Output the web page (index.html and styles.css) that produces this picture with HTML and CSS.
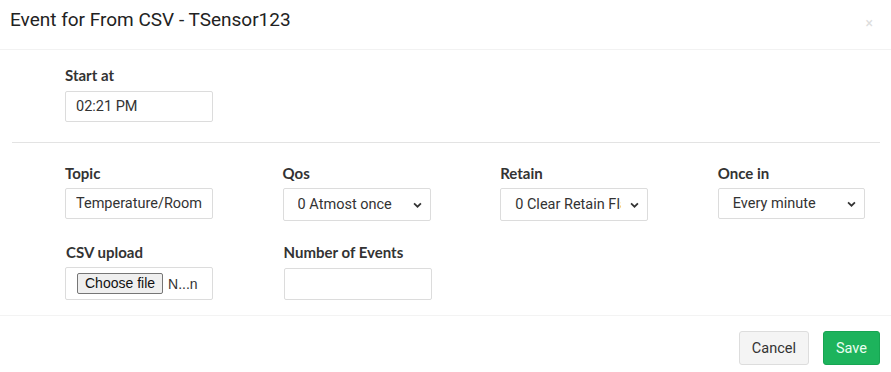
FILE: index.html
```html
<!DOCTYPE html>
<html>
<head>
<meta charset="utf-8">
<link rel="stylesheet" href="styles.css">
</head>
<body>
<div class="modal">
  <div class="modal-header">
    <h4 class="modal-title">Event for From CSV - TSensor123</h4>
    <span class="close">×</span>
  </div>
  <div class="modal-body">
    <div class="section">
      <div class="field">
        <label class="label">Start at</label>
        <input class="control" type="text" value="02:21 PM">
      </div>
    </div>
    <hr class="divider">
    <div class="grid">
      <div class="field">
        <label class="label">Topic</label>
        <input class="control" type="text" value="Temperature/Room1">
      </div>
      <div class="field">
        <label class="label">Qos</label>
        <select class="control select"><option>0 Atmost once</option></select>
      </div>
      <div class="field">
        <label class="label">Retain</label>
        <select class="control select"><option>0 Clear Retain Flag</option></select>
      </div>
      <div class="field">
        <label class="label">Once in</label>
        <select class="control select short"><option>Every minute</option></select>
      </div>
      <div class="field">
        <label class="label">CSV upload</label>
        <div class="control file"><span class="file-btn">Choose file</span><span class="file-name">N...n</span></div>
      </div>
      <div class="field">
        <label class="label">Number of Events</label>
        <input class="control tall" type="text" value="">
      </div>
    </div>
  </div>
  <div class="modal-footer">
    <button class="btn btn-default">Cancel</button>
    <button class="btn btn-success">Save</button>
  </div>
</div>
</body>
</html>
```
FILE: styles.css
```css
* { box-sizing: border-box; }
body {
  margin: 0;
  background: #fff;
  font-family: "Roboto", "Liberation Sans", sans-serif;
  color: #333;
}
.modal { width: 891px; height: 372px; background: #fff; overflow: hidden; }
.modal-header {
  height: 50px;
  padding: 8px 10px 0 10px;
  border-bottom: 1px solid #f2f2f2;
  display: flex;
  justify-content: space-between;
}
.modal-title {
  margin: 0;
  font-size: 19px;
  font-weight: 400;
  color: #222;
}
.close {
  font-size: 14px;
  color: #ddd;
  margin: 7px 8px 0 0;
}
.modal-body { padding: 16px 0 0 0; }
.section { padding: 0 0 20px 65px; }
.field { display: flex; flex-direction: column; }
.label {
  font-family: "Lato", sans-serif;
  font-weight: 700;
  font-size: 15px;
  color: #333;
  margin-bottom: 6px;
  line-height: 18px;
}
.section .label { margin-bottom: 7px; }
.control {
  width: 148px;
  height: 31px;
  border: 1px solid #dcdcdc;
  border-radius: 2px;
  background: #fff;
  font-family: "Roboto", sans-serif;
  font-size: 14.5px;
  color: #333;
  padding: 0 10px;
  outline: none;
}
.select {
  height: 33px;
  appearance: none;
  -webkit-appearance: none;
  background-image: url("data:image/svg+xml,%3Csvg xmlns='http://www.w3.org/2000/svg' width='10' height='7' viewBox='0 0 10 7'%3E%3Cpath d='M1 1.5l4 4 4-4' fill='none' stroke='%23333' stroke-width='2'/%3E%3C/svg%3E");
  background-repeat: no-repeat;
  background-position: right 8px center;
  background-size: 9px 6px;
  padding: 0 26px 0 14px;
}
.select.short { height: 31px; width: 147px; }
.tall { height: 32px; }
.file {
  display: flex;
  align-items: center;
  height: 33px;
  padding: 0 11px;
  overflow: hidden;
  white-space: nowrap;
}
.file-btn {
  font-family: "Liberation Sans", Arial, sans-serif;
  font-size: 14px;
  color: #111;
  background: #efefef;
  border: 1px solid #767676;
  border-radius: 2px;
  padding: 1px 7px;
  line-height: 17px;
}
.file-name {
  font-family: "Liberation Sans", Arial, sans-serif;
  font-size: 14px;
  margin-left: 5px;
  color: #333;
}
.divider {
  margin: 0 11px 0 12px;
  border: 0;
  border-top: 1px solid #e3e3e3;
}
.grid {
  display: grid;
  grid-template-columns: repeat(4, 217.6px);
  padding: 21px 0 0 65px;
  row-gap: 22px;
}
.grid .field:nth-child(5) .label { margin-left: 1px; }
.grid .field:nth-child(6) .label { margin-left: 1px; }
.grid .field:nth-child(6) .control { margin-left: 1px; margin-top: 1px; }
.modal-footer {
  margin-top: 15px;
  border-top: 1px solid #f3f3f3;
  display: flex;
  justify-content: flex-end;
  gap: 14px;
  padding: 15px 11px 0 0;
}
.btn {
  height: 34px;
  font-family: "Roboto", sans-serif;
  font-size: 14.5px;
  border-radius: 3px;
  padding: 0 12px;
}
.btn-default { background: #f4f4f4; border: 1px solid #ddd; color: #333; }
.btn-success { background: #1db35c; border: 1px solid #17a552; color: #eafff1; }
```
